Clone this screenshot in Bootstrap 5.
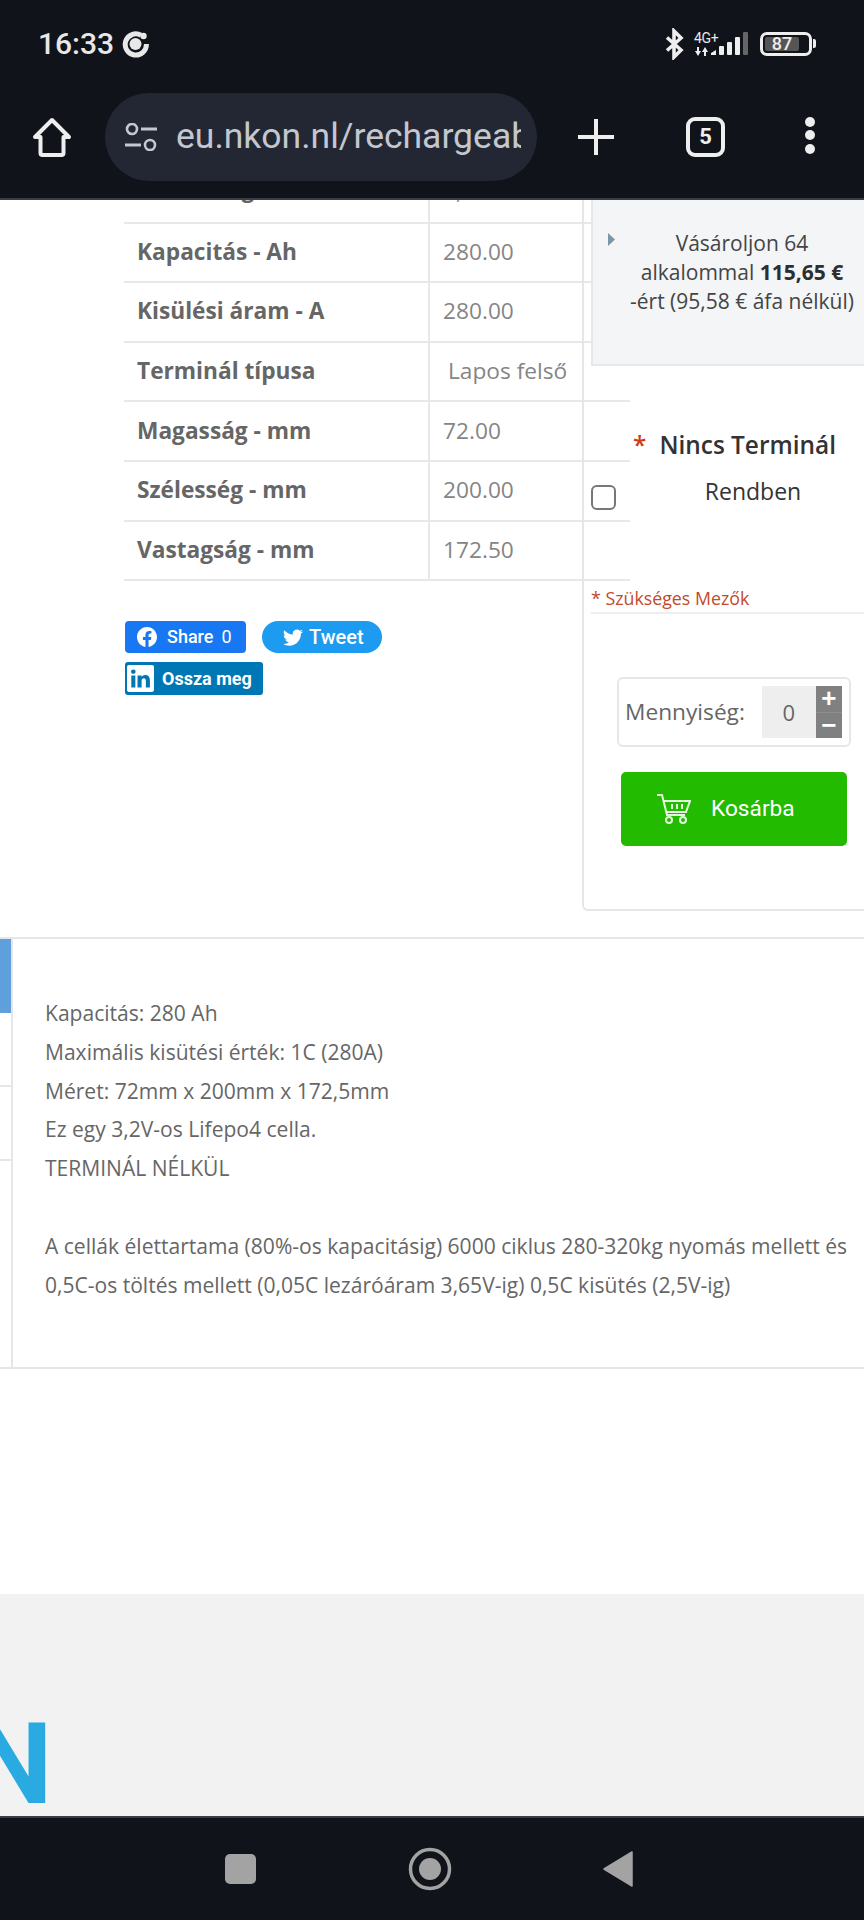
<!DOCTYPE html>
<html lang="hu">
<head>
    <meta charset="UTF-8">
    <meta name="viewport" content="width=device-width, initial-scale=1.0">
    <title>NKON</title>
    <link href="https://cdn.jsdelivr.net/npm/bootstrap@5.3.0/dist/css/bootstrap.min.css" rel="stylesheet">
    <style>
        html, body { width: 864px; height: 1920px; overflow: hidden; }
        body { font-family: "Open Sans", sans-serif; color: #666; background: #fff; }

        /* browser chrome */
        .chrome { height: 200px; background: #10131a; border-bottom: 2px solid #3b3e46; font-family: Roboto, sans-serif; color: #e8e8e8; flex: none; position: relative; z-index: 3; }
        .status-row { height: 87px; padding-left: 38px; }
        .clock { font-size: 30px; font-weight: 500; line-height: 1; }
        .net-wrap { width: 30px; margin-left: 9px; }
        .net-text { font-size: 14px; line-height: 13px; letter-spacing: -.3px; margin-bottom: 2px; }
        .net-bars { margin-left: -13px; align-self: center; }
        .battery { width: 52px; height: 24px; border: 3px solid #eee; border-radius: 7px; margin-left: 12px; padding: 2px; }
        .battery-fill { background: #555; width: 34px; height: 100%; border-radius: 2px; font-size: 18px; font-weight: 500; line-height: 14px; text-align: center; color: #eee; }
        .battery-tip { width: 3px; height: 9px; background: #eee; border-radius: 0 2px 2px 0; margin-left: 1px; margin-right: 48px; }
        .tool-row { height: 88px; margin-top: 6px; padding-left: 32px; }
        .url-pill { width: 432px; height: 88px; margin-left: 33px; margin-right: 41px; background: #222733; border-radius: 44px; padding-left: 20px; overflow: hidden; }
        .url-text { width: 345px; margin-left: 19px; overflow: hidden; white-space: nowrap; font-size: 35.5px; color: #c4c7cf; }
        .tab-count { width: 39px; height: 40px; margin-left: 72px; margin-right: 80px; border: 4px solid #eee; border-radius: 9px; font-size: 22px; font-weight: 700; line-height: 1; color: #eee; }
        .dots span { display: block; width: 10px; height: 10px; border-radius: 50%; background: #eee; margin-bottom: 3.500px; }

        /* product area */
        .product-area { height: 737px; flex: none; overflow: hidden; }
        .spec-col { width: 458px; margin-left: 124px; flex: none; }
        .spec-table { width: 506px; margin: -37px 0 0; table-layout: fixed; border-collapse: collapse; max-width: none; }
        .spec-table th, .spec-table td { height: 59.6px; padding: 0 13px 1px; border: 0; border-bottom: 2px solid #e8e8e8; font-size: 22.7px; vertical-align: middle; color: #666; }
        .spec-table th { width: 305px; font-weight: 700; color: #666; border-right: 2px solid #e8e8e8; }
        .spec-table td { color: #858585; }
        .spec-table td.indent { padding-left: 18px; white-space: nowrap; }
        .spec-table tr.peek th { padding-bottom: 6px; }
        .spec-table tr.peek td { padding-bottom: 3px; }
        .share-wrap { width: 280px; margin: 40px 0 0 1px; column-gap: 16px; row-gap: 9px; font-family: Roboto, sans-serif; color: #fff; }
        .share-btn { height: 32px; font-size: 18px; font-weight: 500; line-height: 1; }
        .share-fb { width: 121px; background: #1877f2; border-radius: 4px; padding-left: 12px; }
        .share-fb svg { margin-right: 10px; }
        .share-tw { width: 120px; background: #1d9bf0; border-radius: 16px; padding-left: 21px; font-size: 20px; }
        .share-tw svg { margin-right: 6px; }
        .share-in { width: 138px; height: 33px; background: #0077b5; border-radius: 3px; padding-left: 2px; font-size: 18px; font-weight: 700; }
        .share-count { font-weight: 400; margin-left: 8px; }

        .buy-box { width: 300px; height: 711px; flex: none; border: 2px solid #e6e6e6; border-top: 0; border-right: 0; border-bottom-left-radius: 6px; padding-left: 7px; position: relative; }
        .price-panel { height: 166px; background: #f3f5f7; border: 2px solid #e6e8ea; border-top: 0; border-right: 0; padding: 29px 0 0 15px; position: relative; color: #444; font-size: 21px; line-height: 29px; }
        .price-text { width: 234px; margin-left: 10px; }
        .price-text b { color: #2e2e2e; }
        .option-title { margin-top: 61px; padding-left: 42px; font-size: 24.400px; font-weight: 600; line-height: 36px; color: #333; }
        .required-star { color: #d03a17; margin-right: 13px; }
        .option-row { margin-top: 10px; font-size: 23px; color: #333; line-height: 36px; }
        .option-check { width: 25px; height: 25px; margin: 12px 0 0; border: 2px solid #777; border-radius: 5px; flex: none; background-color: #fff; }
        .option-label { width: 222px; margin-left: 26px; text-align: center; }
        .required-note { margin-top: 76px; padding-bottom: 2px; border-bottom: 2px solid #eee; font-size: 17.800px; line-height: 24px; color: #c24a2c; width: 273px; }
        .qty-box { width: 234px; height: 70px; margin: 63px 0 0 26px; border: 2px solid #e6e6e6; border-radius: 6px; padding-left: 6px; font-size: 22.700px; color: #666; }
        .qty-input { width: 54px; height: 52px; margin-left: 17px; background: #eee; font-size: 22px; color: #666; }
        .qty-steps { width: 26px; height: 52px; background: #808080; color: #fff; }
        .qty-steps span { flex: 1; font-family: "Liberation Sans", sans-serif; font-size: 26px; font-weight: 700; line-height: 25px; }
        .qty-steps span + span { border-top: 1px solid #8e8e8e; }
        .cart-btn { width: 226px; height: 74px; margin: 25px 0 0 30px; background: #22bb00; border: 0; border-radius: 5px; color: #fff; font-family: Roboto, sans-serif; font-size: 22.700px; padding: 0 0 0 36px; }
        .cart-btn svg { margin-right: 20px; }
        .cart-btn:hover { background: #22bb00; color: #fff; }

        /* description */
        .desc-area { height: 432px; flex: none; border-top: 2px solid #e6e6e6; border-bottom: 2px solid #e6e6e6; }
        .desc-tabs { width: 13px; flex: none; border-right: 2px solid #e6e6e6; }
        .desc-tab-active { height: 74px; background: #5fa0dc; }
        .desc-tab { height: 74px; border-bottom: 2px solid #e6e6e6; }
        .desc-text { padding: 55px 0 0 32px; font-size: 21.050px; line-height: 38.8px; color: #666; white-space: nowrap; }

        .page-gap { height: 225px; flex: none; }
        .site-footer { height: 222px; flex: none; background: #f2f2f2; overflow: hidden; }
        .logo-text { margin: 113px 0 0 -28px; font-family: Roboto, sans-serif; font-size: 114px; font-weight: 700; line-height: 1; color: #29abe2; }

        .nav-keys { height: 104px; flex: none; background: #10131a; border-top: 2px solid #3b3e46; padding-left: 225px; column-gap: 151px; }
    </style>
</head>
<body class="d-flex flex-column">

    <!-- Browser chrome -->
    <header class="chrome">
        <div class="status-row d-flex align-items-center">
            <span class="clock">16:33</span>
            <svg class="ms-2" width="28" height="28" viewBox="0 0 28 28"><path d="M19 5.2A10.6 10.6 0 1 0 24.4 14" fill="none" stroke="#e8e8e8" stroke-width="5"/><circle cx="13.5" cy="14" r="6" fill="#e8e8e8"/><circle cx="21.5" cy="6" r="3.2" fill="#e8e8e8"/></svg>
            <svg class="ms-auto" width="20" height="32" viewBox="0 0 20 32"><path d="M2 9.5 16 22l-7 7V3l7 7L2 22.5" fill="none" stroke="#eee" stroke-width="3.6"/></svg>
            <div class="net-wrap">
                <div class="net-text">4G+</div>
                <svg class="d-block" width="16" height="9" viewBox="0 0 16 9"><path d="M3 0h2v4h2L4 9 1 4h2zM10 9h2V5h2l-3-5-3 5h2z" fill="#eee"/></svg>
            </div>
            <svg class="net-bars" width="37" height="23" viewBox="0 0 37 23"><path d="M0 23v-2l5-3v5z" fill="#eee"/><rect x="8" y="14" width="5" height="9" rx="1" fill="#eee"/><rect x="16" y="10" width="5" height="13" rx="1" fill="#eee"/><rect x="24" y="5" width="5" height="18" rx="1" fill="#eee"/><rect x="32" y="0" width="5" height="23" rx="1" fill="#666"/></svg>
            <div class="battery"><div class="battery-fill">87</div></div>
            <div class="battery-tip"></div>
        </div>
        <div class="tool-row d-flex align-items-center">
            <svg width="40" height="40" viewBox="0 0 40 40"><path d="M20 3 37 20h-5.500v16a2 2 0 0 1-2 2h-19a2 2 0 0 1-2-2V20H3z" fill="none" stroke="#eee" stroke-width="4" stroke-linejoin="round"/></svg>
            <div class="url-pill d-flex align-items-center">
                <svg width="32" height="28" viewBox="0 0 32 28"><circle cx="7" cy="6" r="5" fill="none" stroke="#c4c7cf" stroke-width="2.600"/><path d="M16 6h16M0 22h16" stroke="#c4c7cf" stroke-width="3"/><circle cx="25" cy="22" r="5" fill="none" stroke="#c4c7cf" stroke-width="2.600"/></svg>
                <div class="url-text">eu.nkon.nl/rechargeab</div>
            </div>
            <svg width="36" height="36" viewBox="0 0 36 36"><path d="M18 0v36M0 18h36" stroke="#eee" stroke-width="4" stroke-linecap="round"/></svg>
            <div class="tab-count d-flex align-items-center justify-content-center">5</div>
            <div class="dots"><span></span><span></span><span></span></div>
        </div>
    </header>

    <!-- Spec table and buy box -->
    <section class="product-area d-flex">
        <div class="spec-col">
            <table class="table spec-table">
                <tbody>
                    <tr class="peek"><th>Feszültség - V</th><td>3,2V</td></tr>
                    <tr><th>Kapacitás - Ah</th><td>280.00</td></tr>
                    <tr><th>Kisülési áram - A</th><td>280.00</td></tr>
                    <tr><th>Terminál típusa</th><td class="indent">Lapos felső</td></tr>
                    <tr><th>Magasság - mm</th><td>72.00</td></tr>
                    <tr><th>Szélesség - mm</th><td>200.00</td></tr>
                    <tr><th>Vastagság - mm</th><td>172.50</td></tr>
                </tbody>
            </table>
            <div class="share-wrap d-flex flex-wrap">
                <div class="share-btn share-fb d-flex align-items-center">
                    <svg width="20" height="20" viewBox="0 0 16 16"><path fill="#fff" d="M16 8.049c0-4.446-3.582-8.05-8-8.05C3.58 0-.002 3.603-.002 8.05c0 4.017 2.926 7.347 6.75 7.951v-5.625h-2.03V8.05H6.75V6.275c0-2.017 1.195-3.131 3.022-3.131.876 0 1.791.157 1.791.157v1.98h-1.009c-.993 0-1.303.621-1.303 1.258v1.51h2.218l-.354 2.326H9.25V16c3.824-.604 6.750-3.934 6.750-7.951z"/></svg>
                    Share<span class="share-count">0</span>
                </div>
                <div class="share-btn share-tw d-flex align-items-center">
                    <svg width="20" height="20" viewBox="0 0 16 16"><path fill="#fff" d="M5.026 15c6.038 0 9.341-5.003 9.341-9.334 0-.14 0-.282-.006-.422A6.685 6.685 0 0 0 16 3.542a6.658 6.658 0 0 1-1.889.518 3.301 3.301 0 0 0 1.447-1.817 6.533 6.533 0 0 1-2.087.793A3.286 3.286 0 0 0 7.875 6.03a9.325 9.325 0 0 1-6.767-3.429 3.289 3.289 0 0 0 1.018 4.382A3.323 3.323 0 0 1 .64 6.575v.045a3.288 3.288 0 0 0 2.632 3.218 3.203 3.203 0 0 1-.865.115 3.230 3.230 0 0 1-.614-.057 3.283 3.283 0 0 0 3.067 2.277A6.588 6.588 0 0 1 .78 13.58a6.320 6.320 0 0 1-.78-.045A9.344 9.344 0 0 0 5.026 15z"/></svg>
                    Tweet
                </div>
                <div class="share-btn share-in d-flex align-items-center">
                    <svg class="me-2" width="27" height="27" viewBox="0 0 16 16"><path fill="#fff" d="M0 1.146C0 .513.526 0 1.175 0h13.65C15.474 0 16 .513 16 1.146v13.708c0 .633-.526 1.146-1.175 1.146H1.175C.526 16 0 15.487 0 14.854V1.146zm4.943 12.248V6.169H2.542v7.225h2.401zm-1.2-8.212c.837 0 1.358-.554 1.358-1.248-.015-.709-.52-1.248-1.342-1.248-.822 0-1.359.54-1.359 1.248 0 .694.521 1.248 1.327 1.248h.016zm4.908 8.212V9.359c0-.216.016-.432.08-.586.173-.431.568-.878 1.232-.878.869 0 1.216.662 1.216 1.634v3.865h2.401V9.25c0-2.22-1.184-3.252-2.764-3.252-1.274 0-1.845.7-2.165 1.193v.025h-.016a5.540 5.540 0 0 1 .016-.025V6.169h-2.4c.03.678 0 7.225 0 7.225h2.4z"/></svg>
                    Ossza meg
                </div>
            </div>
        </div>

        <aside class="buy-box">
            <div class="price-panel d-flex align-items-start">
                <svg class="mt-1" width="7" height="13" viewBox="0 0 7 13"><path d="M0 0 7 6.500 0 13z" fill="#7b96a8"/></svg>
                <div class="price-text text-center">Vásároljon 64<br>alkalommal <b>115,65 €</b><br>-ért (95,58 € áfa nélkül)</div>
            </div>
            <div class="option-title"><span class="required-star">*</span>Nincs Terminál</div>
            <div class="option-row d-flex">
                <input class="form-check-input option-check" type="checkbox" aria-label="Rendben">
                <div class="option-label">Rendben</div>
            </div>
            <div class="required-note">* Szükséges Mezők</div>
            <div class="qty-box d-flex align-items-center">
                <span>Mennyiség:</span>
                <div class="qty-input d-flex align-items-center justify-content-center">0</div>
                <div class="qty-steps d-flex flex-column text-center"><span>+</span><span>−</span></div>
            </div>
            <button type="button" class="btn cart-btn d-flex align-items-center">
                <svg width="34" height="30" viewBox="0 0 34 30" fill="none" stroke="#e3f7dc" stroke-width="2"><path d="M0 1h5l5 20h18"/><path d="M6.500 7H33l-4 11H10"/><path d="M15 10v5M20 10v5M25 10v5"/><circle cx="12" cy="26" r="3"/><circle cx="26" cy="26" r="3"/></svg>
                Kosárba
            </button>
        </aside>
    </section>

    <!-- Description -->
    <section class="desc-area d-flex">
        <div class="desc-tabs">
            <div class="desc-tab-active"></div>
            <div class="desc-tab"></div>
            <div class="desc-tab"></div>
        </div>
        <div class="desc-text">
            Kapacitás: 280 Ah<br>
            Maximális kisütési érték: 1C (280A)<br>
            Méret: 72mm x 200mm x 172,5mm<br>
            Ez egy 3,2V-os Lifepo4 cella.<br>
            TERMINÁL NÉLKÜL<br>
            <br>
            A cellák élettartama (80%-os kapacitásig) 6000 ciklus 280-320kg nyomás mellett és<br>
            0,5C-os töltés mellett (0,05C lezáróáram 3,65V-ig) 0,5C kisütés (2,5V-ig)
        </div>
    </section>

    <div class="page-gap"></div>

    <footer class="site-footer">
        <div class="logo-text">N</div>
    </footer>

    <!-- Android nav keys -->
    <nav class="nav-keys d-flex align-items-center">
        <svg width="32" height="32" viewBox="0 0 32 32"><rect x="0" y="1" width="31" height="30" rx="5" fill="#a3a3a3"/></svg>
        <svg width="44" height="44" viewBox="0 0 44 44"><circle cx="22" cy="22" r="19.500" fill="none" stroke="#a3a3a3" stroke-width="3.500"/><circle cx="22" cy="22" r="11" fill="#a3a3a3"/></svg>
        <svg width="30" height="36" viewBox="0 0 30 36"><path d="M29 1v34L1 18z" fill="#a3a3a3" stroke="#a3a3a3" stroke-width="1.500" stroke-linejoin="round"/></svg>
    </nav>

</body>
</html>
